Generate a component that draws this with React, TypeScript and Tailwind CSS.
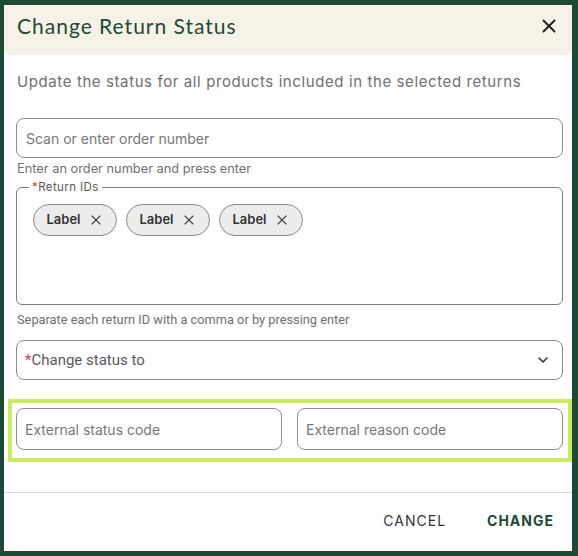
import React from "react";
import { X, ChevronDown } from "lucide-react";

const CHIPS = ["Label", "Label", "Label"];

export default function App() {
  return (
    <div className="w-[578px] h-[556px] bg-[#1c4a32] pt-[5px] pl-[4px] pr-[6px] pb-[5px] font-['Roboto',sans-serif]">
      <div className="h-full bg-white flex flex-col">
        {/* Header */}
        <div className="h-[50px] bg-[#f6f2e7] flex items-center justify-between pl-[13px] pr-[12px] pb-[9px]">
          <h1 className="text-[21px] tracking-[1px] text-[#1d4a33] font-['Lato',sans-serif] font-normal">
            Change Return Status
          </h1>
          <X className="w-[22px] h-[22px] text-[#222]" strokeWidth={2.2} />
        </div>

        {/* Body */}
        <div className="flex flex-col">
          <p className="pl-[13px] mt-[17px] text-[15px] leading-[20px] text-[#6f6f6f] tracking-[0.6px] font-['Inter',sans-serif]">
            Update the status for all products included in the selected returns
          </p>

          <div className="pl-[12px] pr-[9px] mt-[26px]">
            <div className="h-[40px] rounded-[8px] border border-[#8c8c8c] flex items-center px-[9px] text-[14px] text-[#777] font-['Inter',sans-serif]">
              Scan or enter order number
            </div>
            <p className="mt-[3px] pl-[1px] text-[12.8px] leading-[16px] text-[#707070] font-['Inter',sans-serif]">
              Enter an order number and press enter
            </p>

            {/* Return IDs */}
            <fieldset className="mt-[4px] h-[124px] rounded-[6px] border border-[#7d7d7d] px-[16px] pt-[11px]">
              <legend className="ml-[-4px] px-[3px] text-[11.5px] leading-[12px] tracking-[0.4px] text-[#555] font-['Inter',sans-serif]">
                <span className="text-[#e53935]">*</span>Return IDs
              </legend>
              <div className="flex gap-[9px]">
                {CHIPS.map((c, i) => (
                  <div
                    key={i}
                    className="h-[32px] w-[84px] rounded-full bg-[#ececec] border border-[#8c8c8c] flex items-center justify-center gap-[7px] text-[13px] font-semibold text-[#333] font-['Inter',sans-serif]"
                  >
                    {c}
                    <X className="w-[16px] h-[16px] text-[#444]" strokeWidth={1.7} />
                  </div>
                ))}
              </div>
            </fieldset>
            <p className="mt-[7px] pl-[1px] text-[12.8px] leading-[16px] text-[#707070]">
              Separate each return ID with a comma or by pressing enter
            </p>

            {/* Status select */}
            <div className="mt-[12px] h-[40px] rounded-[8px] border border-[#8c8c8c] flex items-center justify-between pl-[8px] pr-[11px] text-[15px] text-[#5a5a5a]">
              <span>
                <span className="text-[#e53935]">*</span>Change status to
              </span>
              <ChevronDown className="w-[16px] h-[16px] text-[#333]" strokeWidth={2.4} />
            </div>
          </div>

          {/* Highlighted external codes */}
          <div className="mt-[19px] ml-[4px] border-[4px] border-[#c9ec5f] pt-[5px] pb-[8px] pl-[4px] pr-[5px] flex gap-[15px]">
            <div className="flex-1 h-[42px] rounded-[8px] border border-[#8c8c8c] flex items-center px-[8px] text-[14px] text-[#777] font-['Inter',sans-serif]">
              External status code
            </div>
            <div className="flex-1 h-[42px] rounded-[8px] border border-[#8c8c8c] flex items-center px-[8px] text-[14px] text-[#777] font-['Inter',sans-serif]">
              External reason code
            </div>
          </div>

          <div className="mt-[30px] border-t border-[#dcdcdc]" />

          {/* Footer */}
          <div className="flex justify-end items-center gap-[41px] pr-[18px] mt-[17px] text-[14px] tracking-[1px] font-['Inter',sans-serif]">
            <button className="text-[#333] font-normal">CANCEL</button>
            <button className="text-[#1d4a33] font-bold">CHANGE</button>
          </div>
        </div>
      </div>
    </div>
  );
}
